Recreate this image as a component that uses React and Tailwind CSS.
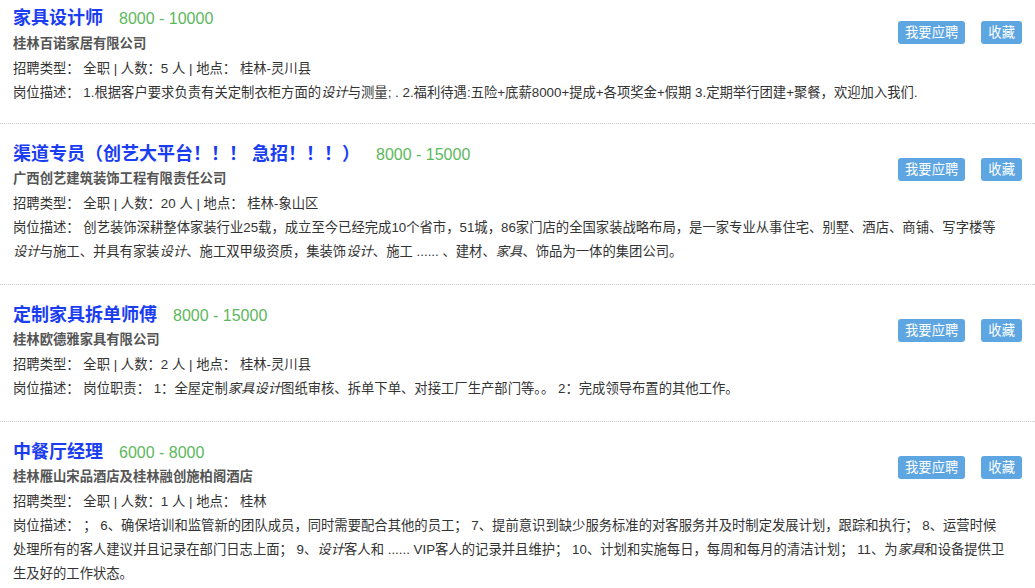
import React from "react";

const jobs = [
  {
    title: "家具设计师",
    salary: "8000 - 10000",
    company: "桂林百诺家居有限公司",
    num: "5",
    place: "桂林-灵川县",
    desc: [
      [
        "1.根据客户要求负责有关定制衣柜方面的",
        { i: "设计" },
        "与测量; . 2.福利待遇:五险+底薪8000+提成+各项奖金+假期 3.定期举行团建+聚餐，欢迎加入我们.",
      ],
    ],
  },
  {
    title: "渠道专员（创艺大平台！！！ 急招！！！）",
    salary: "8000 - 15000",
    company: "广西创艺建筑装饰工程有限责任公司",
    num: "20",
    place: "桂林-象山区",
    desc: [
      [
        "创艺装饰深耕整体家装行业25载，成立至今已经完成10个省市，51城，86家门店的全国家装战略布局，是一家专业从事住宅、别墅、酒店、商铺、写字楼等",
      ],
      [
        { i: "设计" },
        "与施工、并具有家装",
        { i: "设计" },
        "、施工双甲级资质，集装饰",
        { i: "设计" },
        "、施工 ...... 、建材、",
        { i: "家具" },
        "、饰品为一体的集团公司。",
      ],
    ],
  },
  {
    title: "定制家具拆单师傅",
    salary: "8000 - 15000",
    company: "桂林欧德雅家具有限公司",
    num: "2",
    place: "桂林-灵川县",
    desc: [
      [
        "岗位职责： 1：全屋定制",
        { i: "家具设计" },
        "图纸审核、拆单下单、对接工厂生产部门等。。 2：完成领导布置的其他工作。",
      ],
    ],
  },
  {
    title: "中餐厅经理",
    salary: "6000 - 8000",
    company: "桂林雁山宋品酒店及桂林融创施柏阁酒店",
    num: "1",
    place: "桂林",
    desc: [
      [
        "； 6、确保培训和监管新的团队成员，同时需要配合其他的员工； 7、提前意识到缺少服务标准的对客服务并及时制定发展计划，跟踪和执行； 8、运营时候",
      ],
      [
        "处理所有的客人建议并且记录在部门日志上面； 9、",
        { i: "设计" },
        "客人和 ...... VIP客人的记录并且维护； 10、计划和实施每日，每周和每月的清洁计划； 11、为",
        { i: "家具" },
        "和设备提供卫",
      ],
      ["生及好的工作状态。"],
    ],
  },
];

function Seg({ s }) {
  if (typeof s === "string") return s;
  return <i className="italic">{s.i}</i>;
}

function Job({ job, first }) {
  return (
    <div
      className={
        first
          ? "border-b border-dotted border-[#c8c8c8] pl-[13px] pr-[13px] pt-[18px] pb-[18px]"
          : "border-b border-dotted border-[#c8c8c8] pl-[13px] pr-[13px] pt-[18px] pb-[20px]"
      }
    >
      <div className="float-right mt-[16px] flex gap-[16px]">
        <button className="h-[23px] rounded-[3px] bg-[#5ea6e2] px-[7px] text-[13.33px] leading-[23px] text-white">
          我要应聘
        </button>
        <button className="h-[23px] rounded-[3px] bg-[#5ea6e2] px-[7px] text-[13.33px] leading-[23px] text-white">
          收藏
        </button>
      </div>
      <div
        className={
          first
            ? "h-[26px] whitespace-nowrap text-[16px] leading-[26px]"
            : "h-[24px] whitespace-nowrap text-[16px] leading-[24px]"
        }
      >
        <span className="text-[18px] font-bold text-[#1a3df2]">{job.title}</span>
        <span className="ml-[16px] text-[16px] text-[#5cb85c]">{job.salary}</span>
      </div>
      <div
        className={
          first
            ? "h-[26px] text-[13.33px] font-bold leading-[26px] text-[#555]"
            : "h-[25px] text-[13.33px] font-bold leading-[25px] text-[#555]"
        }
      >
        {job.company}
      </div>
      <div
        className={
          first
            ? "h-[24px] text-[13.33px] leading-[24px] text-[#333]"
            : "h-[25px] text-[13.33px] leading-[25px] text-[#333]"
        }
      >
        招聘类型： 全职 | 人数：{job.num} 人 | 地点： {job.place}
      </div>
      {job.desc.map((line, li) => (
        <div key={li} className="h-[24px] whitespace-nowrap text-[13.33px] leading-[24px] text-[#333]">
          {li === 0 ? "岗位描述： " : null}
          {line.map((s, si) => (
            <Seg key={si} s={s} />
          ))}
        </div>
      ))}
    </div>
  );
}

export default function App() {
  return (
    <div className="h-[588px] w-[1035px] overflow-hidden bg-white font-['Liberation_Sans','Noto_Sans_CJK_SC',sans-serif]">
      <div className="mt-[-13px]">
        {jobs.map((job, i) => (
          <Job key={i} job={job} first={i === 0} />
        ))}
      </div>
    </div>
  );
}
